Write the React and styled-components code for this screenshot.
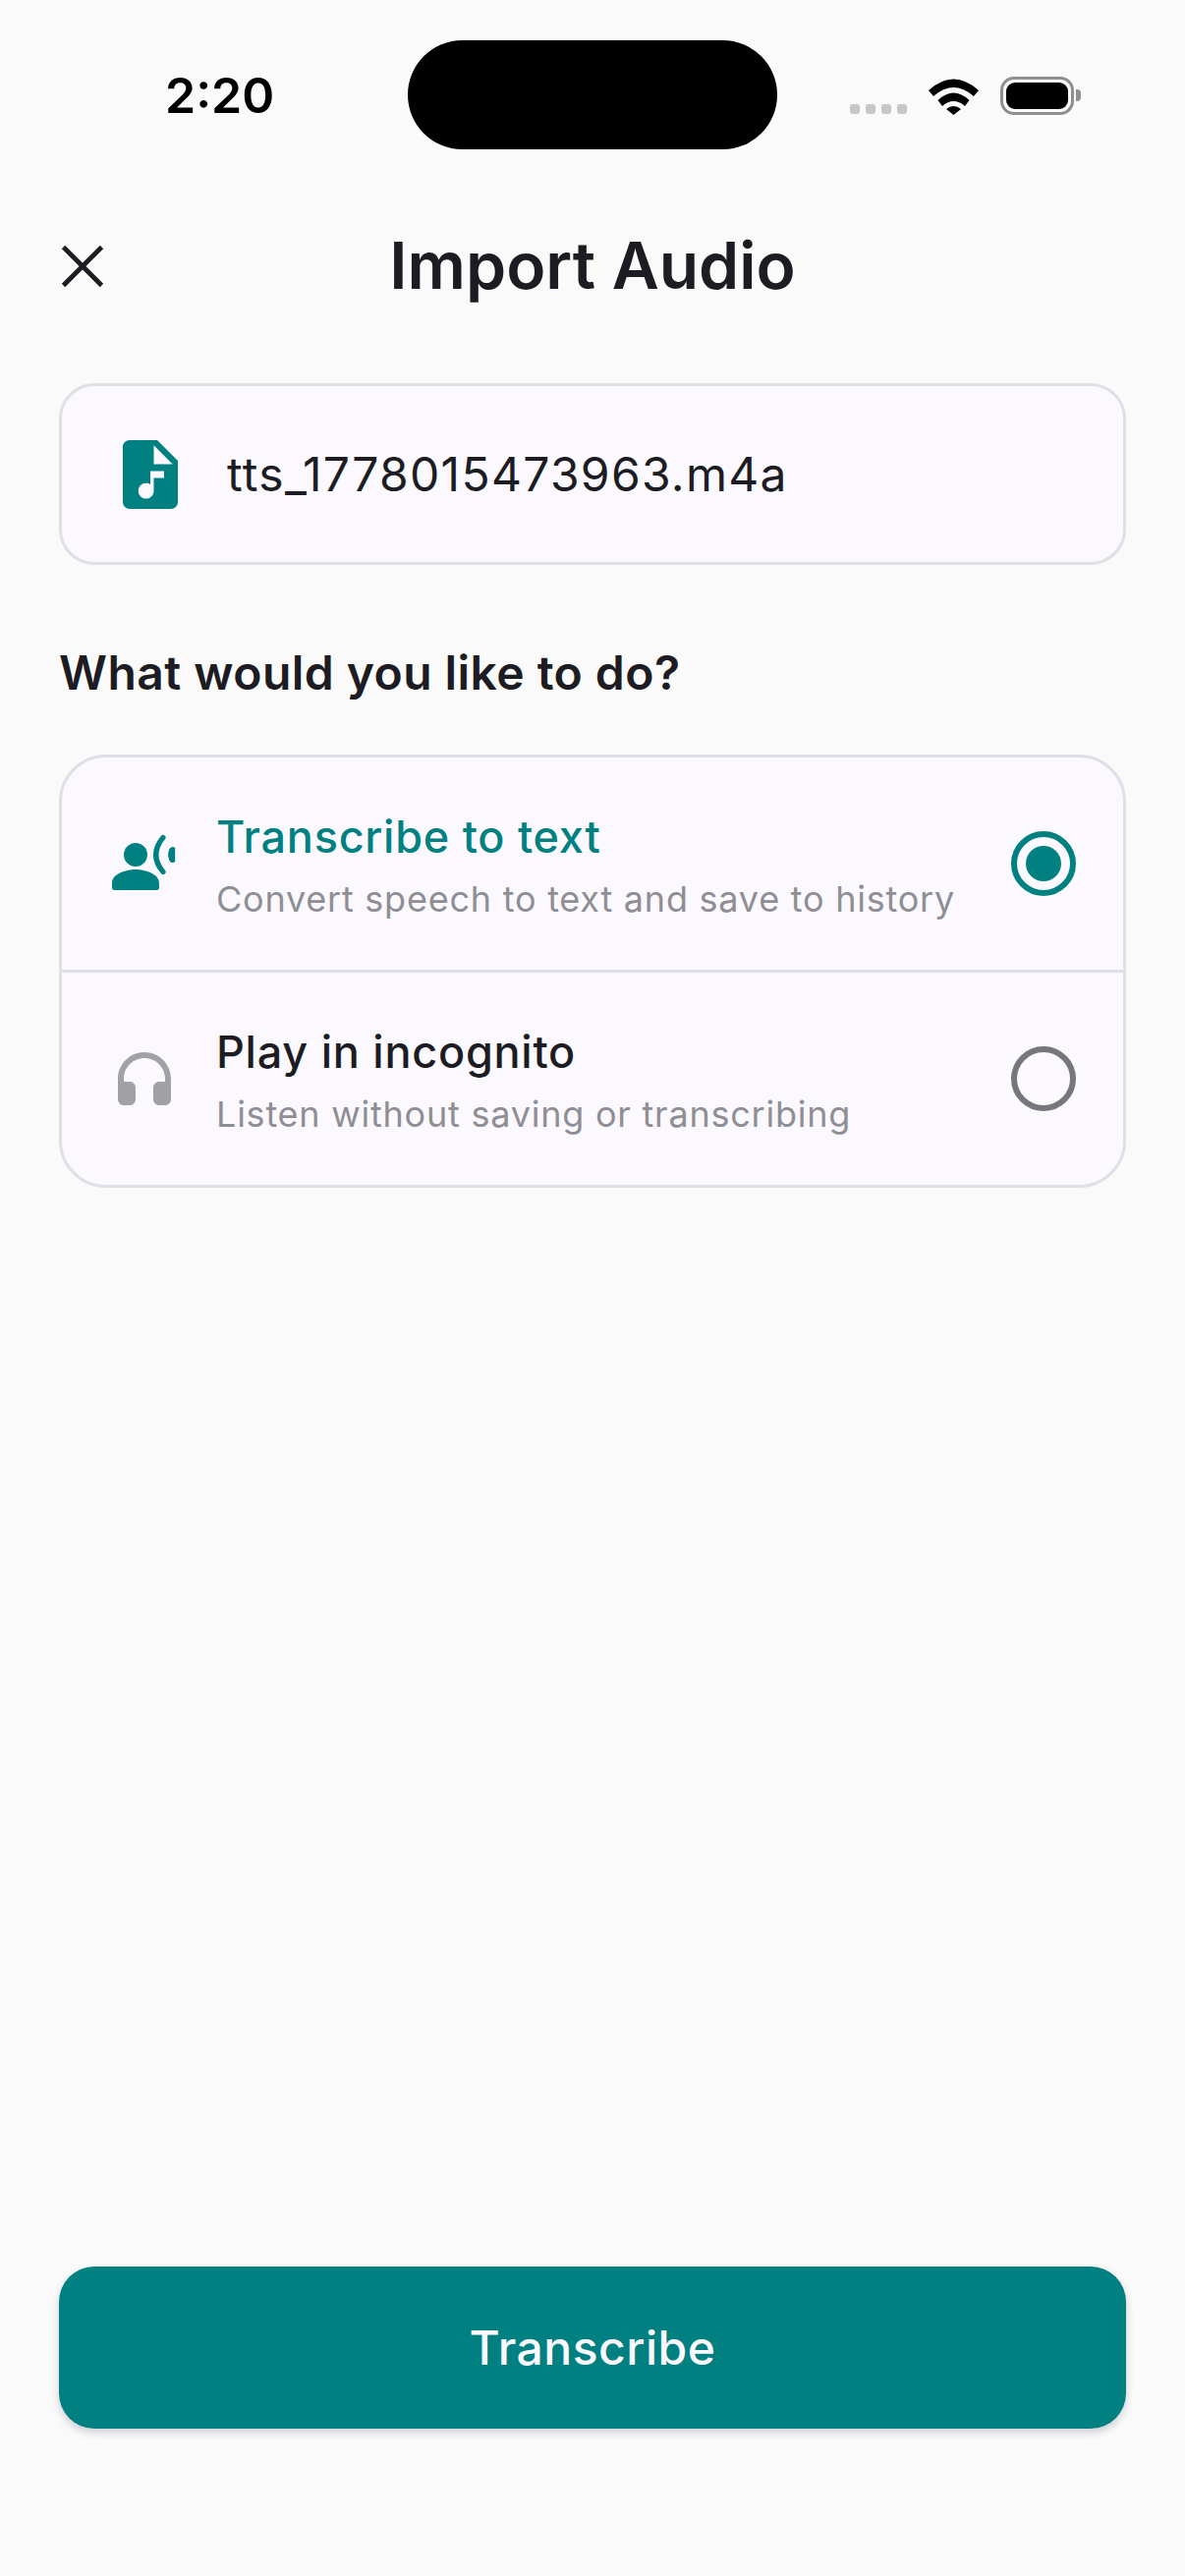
import styled, {createGlobalStyle} from "styled-components";

const teal = "#008080";
const ink = "#1c1c22";

const Global = createGlobalStyle`
  html, body {
    margin: 0;
    padding: 0;
    background: #fafafa;
  }
`;

const Page = styled.div`
  width: 1206px;
  height: 2622px;
  box-sizing: border-box;
  display: flex;
  flex-direction: column;
  background: #fafafa;
  color: ${ink};
  font-family: Inter, "Liberation Sans", sans-serif;
  overflow: hidden;
`;
const StatusBar = styled.div`
  height: 111px;
  margin-top: 41px;
  padding-left: 168px;
  display: flex;
  align-items: center;
`;
const Time = styled.div`
  width: 247px;
  font-size: 50px;
  font-weight: 600;
  color: #000;
`;
const Notch = styled.div`
  width: 376px;
  height: 111px;
  border-radius: 56px;
  background: #000;
`;
const StatusIcons = styled.div`
  display: flex;
  align-items: flex-end;
  gap: 22px;
  height: 39px;
  margin: 2px 0 0 74px;
`;
const SignalDots = styled.div`
  display: flex;
  gap: 6px;
  padding-bottom: 1px;
`;
const SignalDot = styled.span`
  width: 10px;
  height: 10px;
  border-radius: 3px;
  background: #c5c7c9;
`;
const Battery = styled.div`
  position: relative;
  width: 75px;
  height: 39px;
  box-sizing: border-box;
  padding: 3px;
  border: 3px solid #8e8e93;
  border-radius: 14px;
  &::after {
    content: "";
    position: absolute;
    right: -10px;
    top: 10px;
    width: 5px;
    height: 12px;
    border-radius: 0 4px 4px 0;
    background: #8e8e93;
  }
`;
const BatteryFill = styled.div`
  height: 100%;
  border-radius: 9px;
  background: #000;
`;
const Header = styled.div`
  position: relative;
  height: 238px;
  display: flex;
  align-items: center;
  justify-content: center;
`;
const CloseButton = styled.button`
  position: absolute;
  left: 48px;
  top: 83px;
  width: 72px;
  height: 72px;
  padding: 0;
  border: 0;
  background: none;
  color: ${ink};
`;
const Title = styled.h1`
  margin: -3px 0 0;
  font-size: 66px;
  font-weight: 600;
`;
const Content = styled.div`
  flex: 1;
  padding: 0 60px 150px;
  display: flex;
  flex-direction: column;
`;
const Card = styled.div`
  box-sizing: border-box;
  background: #fbf9ff;
  border: 3px solid #e0dfe5;
  border-radius: ${p => p.$radius}px;
  overflow: hidden;
`;
const FileRow = styled.div`
  height: 179px;
  padding-left: 48px;
  display: flex;
  align-items: center;
  gap: 36px;
  font-size: 48px;
  letter-spacing: 1.3px;
`;
const SectionLabel = styled.div`
  margin: 80px 0 54px;
  font-size: 48px;
  font-weight: 600;
  letter-spacing: 0.45px;
`;
const Option = styled.div`
  height: ${p => p.$height}px;
  box-sizing: border-box;
  padding: 0 48px;
  display: flex;
  align-items: center;
  gap: 37px;
  & + & {
    border-top: 3px solid #e0dfe5;
  }
`;
const OptionIcon = styled.svg`
  width: 72px;
  height: 72px;
  flex: none;
  color: ${p => p.$color};
`;
const OptionText = styled.div`
  flex: 1;
  padding-top: 3px;
  display: flex;
  flex-direction: column;
  gap: 14px;
`;
const OptionTitle = styled.div`
  font-size: 45px;
  font-weight: 500;
  letter-spacing: 0.75px;
  color: ${p => (p.$active ? teal : ink)};
`;
const OptionSub = styled.div`
  font-size: 36px;
  letter-spacing: 0.77px;
  color: #8e8e93;
`;
const Radio = styled.div`
  width: 66px;
  height: 66px;
  box-sizing: border-box;
  flex: none;
  display: flex;
  align-items: center;
  justify-content: center;
  border: 6px solid ${p => (p.$on ? teal : "#77767b")};
  border-radius: 50%;
  &::after {
    content: "";
    display: ${p => (p.$on ? "block" : "none")};
    width: 36px;
    height: 36px;
    border-radius: 50%;
    background: ${teal};
  }
`;
const Spacer = styled.div`
  flex: 1;
`;
const PrimaryButton = styled.button`
  height: 165px;
  border: 0;
  border-radius: 36px;
  background: ${teal};
  color: #fbf9ff;
  font-family: inherit;
  font-size: 48px;
  font-weight: 550;
  letter-spacing: 0.5px;
  box-shadow: 0 4px 8px rgba(40, 40, 70, 0.2);
`;

function VoiceIcon() {
  return (
    <OptionIcon viewBox="0 0 24 24" fill="currentColor" $color={teal}>
      <circle cx="9" cy="9" r="4" />
      <path d="M9 14c-3.5 0-8 1.6-8 4.6v1.6c0 .5.3.8.8.8h14.4c.5 0 .8-.3.8-.8v-1.6c0-3-4.5-4.6-8-4.6z" />
      <path d="M18.3 3.2Q13.5 9 18.3 14.8" fill="none" stroke="currentColor" strokeWidth="1.8" strokeLinecap="round" />
      <path d="M22.4 6.6c-.8-.5-1.6-.3-2 .6-.5 1.2-.5 2.4 0 3.6.4.9 1.2 1.1 2 .6z" />
    </OptionIcon>
  );
}

function HeadphonesIcon() {
  return (
    <OptionIcon viewBox="0 0 24 24" fill="currentColor" $color="#a1a1a6">
      <path d="M12 3c-4.97 0-9 4.03-9 9v7c0 1.1.9 2 2 2h2c1.1 0 2-.9 2-2v-4c0-1.1-.9-2-2-2H5v-1c0-3.87 3.13-7 7-7s7 3.13 7 7v1h-2c-1.1 0-2 .9-2 2v4c0 1.1.9 2 2 2h2c1.1 0 2-.9 2-2v-7c0-4.97-4.03-9-9-9z" />
    </OptionIcon>
  );
}

export default function App() {
  return (
    <Page>
      <Global />
      <StatusBar>
        <Time>2:20</Time>
        <Notch />
        <StatusIcons>
          <SignalDots>
            <SignalDot /><SignalDot /><SignalDot /><SignalDot />
          </SignalDots>
          <svg width="51" height="38" viewBox="0 0 51 38">
            <path d="M0 13Q25.500-10 51 13L46 19Q25.500 1 5 19z" fill="#000" />
            <path d="M9.500 23Q25.500 8 41.500 23L37 29Q25.500 19 14 29z" fill="#000" />
            <path d="M18 32Q25.500 26 33 32L25.500 38z" fill="#000" />
          </svg>
          <Battery><BatteryFill /></Battery>
        </StatusIcons>
      </StatusBar>
      <Header>
        <CloseButton>
          <svg width="72" height="72" viewBox="0 0 24 24" fill="none" stroke="currentColor" strokeWidth="1.6">
            <path d="M5.500 5.500 18.500 18.500M18.500 5.500 5.500 18.500" />
          </svg>
        </CloseButton>
        <Title>Import Audio</Title>
      </Header>
      <Content>
        <Card $radius={36}>
          <FileRow>
            <svg width="84" height="84" viewBox="0 0 24 24" fill={teal}>
              <path d="M14 2H6c-1.100 0-2 .9-2 2v16c0 1.100.9 2 2 2h12c1.100 0 2-.9 2-2V8l-6-6zm2 11h-3v3.750c0 1.240-1.010 2.250-2.250 2.250S8.500 17.990 8.500 16.750s1.010-2.250 2.250-2.250c.46 0 .89.14 1.250.38V11h4v2zm-3-4V3.500L18.500 9H13z" />
            </svg>
            <span>tts_1778015473963.m4a</span>
          </FileRow>
        </Card>
        <SectionLabel>What would you like to do?</SectionLabel>
        <Card $radius={48}>
          <Option $height={216}>
            <VoiceIcon />
            <OptionText>
              <OptionTitle $active>Transcribe to text</OptionTitle>
              <OptionSub>Convert speech to text and save to history</OptionSub>
            </OptionText>
            <Radio $on />
          </Option>
          <Option $height={219}>
            <HeadphonesIcon />
            <OptionText>
              <OptionTitle>Play in incognito</OptionTitle>
              <OptionSub>Listen without saving or transcribing</OptionSub>
            </OptionText>
            <Radio />
          </Option>
        </Card>
        <Spacer />
        <PrimaryButton>Transcribe</PrimaryButton>
      </Content>
    </Page>
  );
}
